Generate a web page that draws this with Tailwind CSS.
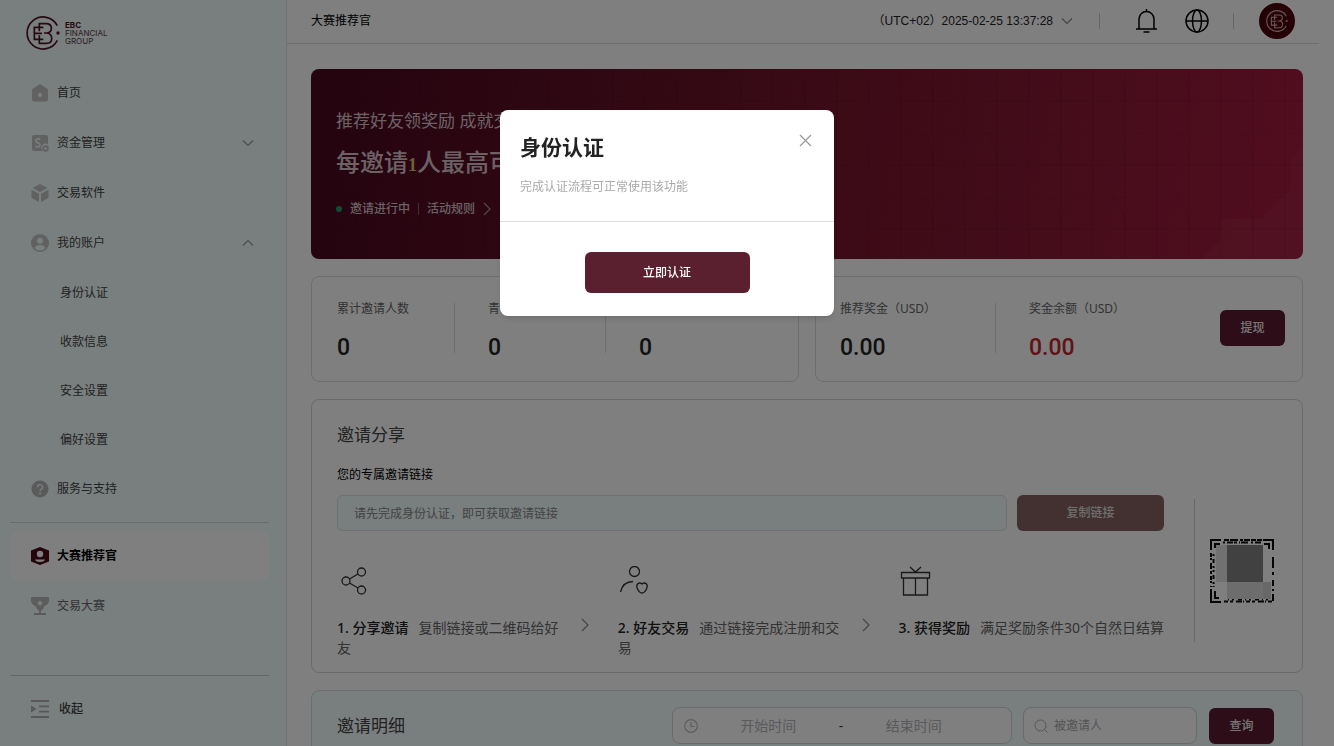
<!DOCTYPE html>
<html lang="zh-CN">

<head>
    <meta charset="UTF-8">
    <meta name="viewport" content="width=device-width, initial-scale=1.0">
    <title>大赛推荐官</title>
    <script src="https://cdn.jsdelivr.net/npm/@tailwindcss/browser@4"></script>
</head>

<body class="h-screen overflow-hidden bg-white text-xs text-[#444] font-['Noto_Sans','Noto_Sans_CJK_SC',sans-serif]">
    <!-- Shared symbols -->
    <svg class="hidden" aria-hidden="true">
        <symbol id="ebc-mark" viewBox="0 0 102 102">
            <g fill="none" stroke="currentColor" stroke-width="5">
                <path d="M94 29A48 48 0 1 0 94 73" />
                <path d="M52 34H25V70H52M25 52H48" />
                <path d="M40 46V23H60C81 23 81 48 63 51H54M63 51C82 54 82 82 62 82H40V58" />
            </g>
            <circle cx="96" cy="51" r="5" fill="currentColor" />
        </symbol>
        <symbol id="chevron-down" viewBox="0 0 12 12">
            <path d="M1 3.5l5 5 5-5" fill="none" stroke="currentColor" stroke-width="1.2" />
        </symbol>
        <symbol id="chevron-right" viewBox="0 0 12 16">
            <path d="M3 2l6 6-6 6" fill="none" stroke="currentColor" stroke-width="1.2" />
        </symbol>
    </svg>

    <div class="flex h-full">
        <!-- Sidebar -->
        <aside class="flex w-[287px] shrink-0 flex-col border-r border-[#e4e4ea] bg-[#f2fcfc]">
            <a href="#" class="flex h-[68px] items-start gap-1 pt-4 pl-[26px] text-[#4e1422]" aria-label="EBC Financial Group">
                <svg class="size-[34px]"><use href="#ebc-mark" /></svg>
                <span class="pt-[5px] pl-px font-['Inter',sans-serif] text-[8px] leading-[8px] text-[#5c3a42]">
                    <b class="text-[#4e1422]">EBC</b><br>FINANCIAL<br>GROUP
                </span>
            </a>

            <nav class="flex flex-col">
                <a href="#" class="flex h-[50px] items-center gap-2 pl-[31px]">
                    <svg class="size-[18px] text-[#c2c2c4]" viewBox="0 0 18 18"><path d="M9 0l7 4.600q1 .8 1 2V15.500q0 2-2 2H3q-2 0-2-2V6.600q0-1.200 1-2z" fill="currentColor" /><circle cx="9" cy="11" r="2" fill="#f2fcfc" /></svg>
                    首页
                </a>
                <a href="#" class="flex h-[50px] items-center gap-2 pr-8 pl-[31px]">
                    <svg class="size-[18px] text-[#c2c2c4]" viewBox="0 0 18 18"><path d="M3 1h12q2 0 2 2v7.500a4 4 0 0 0-5 6.500H3q-2 0-2-2V3q0-2 2-2z" fill="currentColor" /><path d="M9 5.500C8 4 4.500 4.500 5 7s4 1.500 4 4-3.500 2.500-4.500 1" fill="none" stroke="#f2fcfc" stroke-width="1.500" /><circle cx="14.500" cy="14.500" r="2.300" fill="none" stroke="currentColor" stroke-width="2" /></svg>
                    <span class="flex-1">资金管理</span>
                    <svg class="size-3 text-[#999]"><use href="#chevron-down" /></svg>
                </a>
                <a href="#" class="flex h-[50px] items-center gap-2 pl-[31px]">
                    <svg class="size-[18px] text-[#c2c2c4]" viewBox="0 0 18 18" fill="currentColor"><path d="M9 0l7.500 4L9 8 1.500 4zM.500 5.800L8 9.700V18L.500 14zM17.500 5.800L10 9.700V18l7.500-4z" /></svg>
                    交易软件
                </a>
                <a href="#" class="flex h-[50px] items-center gap-2 pr-8 pl-[31px]">
                    <svg class="size-[18px] text-[#c2c2c4]" viewBox="0 0 18 18"><circle cx="9" cy="9" r="9" fill="currentColor" /><circle cx="9" cy="6.800" r="3" fill="#f2fcfc" /><path d="M3.500 14Q5 11 9 11t5.500 3Q12 16.500 9 16.500T3.500 14z" fill="#f2fcfc" /></svg>
                    <span class="flex-1">我的账户</span>
                    <svg class="size-3 rotate-180 text-[#999]"><use href="#chevron-down" /></svg>
                </a>
                <a href="#" class="flex h-[49px] items-center pl-[60px]">身份认证</a>
                <a href="#" class="flex h-[49px] items-center pl-[60px]">收款信息</a>
                <a href="#" class="flex h-[49px] items-center pl-[60px]">安全设置</a>
                <a href="#" class="flex h-[49px] items-center pl-[60px]">偏好设置</a>
                <a href="#" class="flex h-[50px] items-center gap-2 pl-[31px]">
                    <svg class="size-[18px] text-[#b4b4b6]" viewBox="0 0 18 18"><circle cx="9" cy="9" r="8.500" fill="currentColor" /><path d="M6.500 7.200a2.500 2.500 0 1 1 3.600 2.200Q9 10 9 11.200" fill="none" stroke="#f2fcfc" stroke-width="1.400" /><circle cx="9" cy="13.400" r="1" fill="#f2fcfc" /></svg>
                    服务与支持
                </a>
            </nav>

            <div class="mx-2.5 mt-2 mr-[17px] border-t border-[#d6d6da] pt-2">
                <a href="#" class="flex h-[50px] items-center gap-2 rounded-lg bg-white pl-[21px] font-bold text-black">
                    <svg class="size-[18px] text-[#4a0a14]" viewBox="0 0 18 18"><path d="M9 0l9 3.500v11L9 18l-9-3.500v-11z" fill="currentColor" /><circle cx="9" cy="7" r="3.200" fill="#fff" /><path d="M4 12.500h10q-1 2.500-5 2.500t-5-2.500z" fill="#fff" /></svg>
                    大赛推荐官
                </a>
                <a href="#" class="flex h-[50px] items-center gap-2 pl-[21px] text-[#666]">
                    <svg class="size-[18px] text-[#b8b8ba]" viewBox="0 0 18 18"><path d="M0 0h18v4q-1 4-4.500 5-1.500 4-3.500 5v2h5v2H3v-2h5v-2q-2-1-3.500-5Q1 8 0 4z" fill="currentColor" /><path d="M9 3l1 2 2 .3-1.500 1.500.400 2.200L9 8l-1.900 1 .400-2.200L6 5.300 8 5z" fill="#f2fcfc" /></svg>
                    交易大赛
                </a>
            </div>

            <div class="mx-2.5 mt-auto mr-[17px] border-t border-[#c8c8cc] pb-[12px]">
                <button type="button" class="flex h-[58px] w-full items-center gap-2.5 pt-2 pl-[21px] font-medium">
                    <svg class="size-[18px] text-[#b0b0b2]" viewBox="0 0 18 18"><path d="M0 1h18M8 6.300h10M8 11.700h10M0 17h18" stroke="currentColor" stroke-width="1.800" /><path d="M0 5.500L5.500 9 0 12.500z" fill="currentColor" /></svg>
                    收起
                </button>
            </div>
        </aside>

        <div class="min-w-0 flex-1">
            <!-- Header -->
            <header class="mr-[15px] flex h-11 items-center border-b border-[#dcdce4] pr-6 pb-0.5 pl-6 text-black">
                <h1 class="flex-1">大赛推荐官</h1>
                <button type="button" class="flex items-center gap-2 font-['Liberation_Sans','Noto_Sans_CJK_SC',sans-serif] text-[#222]">
                    （UTC+02）2025-02-25 13:37:28
                    <svg class="size-3 text-[#888]"><use href="#chevron-down" /></svg>
                </button>
                <span class="ml-[26px] h-4 w-px bg-[#ccc]"></span>
                <button type="button" class="ml-9" aria-label="通知">
                    <svg class="h-6 w-[21px]" viewBox="0 0 21 24" fill="none" stroke="currentColor" stroke-width="1.500"><path d="M0 20h21M3 20V10a7.500 7.500 0 0 1 15 0v10M10.500 0v2.500M7.500 23h6" /></svg>
                </button>
                <button type="button" class="ml-7" aria-label="语言">
                    <svg class="size-6" viewBox="0 0 24 24" fill="none" stroke="currentColor" stroke-width="1.500"><circle cx="12" cy="12" r="11" /><ellipse cx="12" cy="12" rx="4.500" ry="11" /><path d="M1 12h22" /></svg>
                </button>
                <span class="ml-6 h-4 w-px bg-[#ccc]"></span>
                <button type="button" class="ml-[25px] flex size-9 items-center justify-center rounded-full bg-[#4a0008] text-[#d8b0a8]" aria-label="账户">
                    <svg class="size-[22px]"><use href="#ebc-mark" /></svg>
                </button>
            </header>

            <main class="flex flex-col gap-[17px] pt-[25px] pr-[31px] pl-6">
                <!-- Banner -->
                <section class="relative h-[190px] overflow-hidden rounded-lg bg-linear-100 from-[#48081e] via-[#74162c] to-[#a41c40] px-[25px] pt-10 text-[#d8c4cc]">
                    <svg class="absolute inset-0 size-full" aria-hidden="true">
                        <defs>
                            <pattern id="grid" width="64" height="64" patternUnits="userSpaceOnUse">
                                <path d="M0 0H64M0 32H64M14 0V64M46 0V64M34 0Q46 10 46 32" fill="none" stroke="#30000e" stroke-opacity=".14" />
                            </pattern>
                        </defs>
                        <path d="M890 190l20-20v-20h40l30-30v-30l20-20v120z" fill="#fff" fill-opacity=".03" />
                        <rect width="100%" height="100%" fill="url(#grid)" />
                    </svg>
                    <div class="relative">
                        <p class="text-[17px] leading-6">推荐好友领奖励 成就交易梦想</p>
                        <h2 class="mt-3 text-2xl leading-[34px] font-medium">每邀请<span class="font-['Liberation_Serif',serif] text-lg font-bold text-[#e0c070]">1</span>人最高可得奖励</h2>
                        <div class="mt-[22px] flex items-center font-medium">
                            <span class="mr-2 size-1.5 rounded-full bg-[#1c9c70]"></span>
                            邀请进行中
                            <span class="mx-2 h-3 w-px bg-[#8c5c6c]"></span>
                            <a href="#" class="flex items-center gap-1.5">活动规则
                                <svg class="h-4 w-3 text-[#a88c98]"><use href="#chevron-right" /></svg>
                            </a>
                        </div>
                    </div>
                </section>

                <!-- Stats -->
                <section class="grid grid-cols-2 gap-4 text-[#666]">
                    <dl class="flex rounded-lg border border-[#dcdce0] pt-6 pb-[21px] pl-[25px]">
                        <div class="flex w-[151px] justify-between">
                            <div>
                                <dt class="leading-4">累计邀请人数</dt>
                                <dd class="mt-[19px] font-['Roboto',sans-serif] text-[23px] leading-6 font-medium text-[#222]">0</dd>
                            </div>
                            <span class="mt-0.5 mr-[33px] h-[50px] w-px bg-[#ddd]"></span>
                        </div>
                        <div class="flex w-[151px] justify-between">
                            <div>
                                <dt class="leading-4">青铜推荐</dt>
                                <dd class="mt-[19px] font-['Roboto',sans-serif] text-[23px] leading-6 font-medium text-[#222]">0</dd>
                            </div>
                            <span class="mt-0.5 mr-[33px] h-[50px] w-px bg-[#ddd]"></span>
                        </div>
                        <div>
                            <dt class="leading-4">有效人数</dt>
                            <dd class="mt-[19px] font-['Roboto',sans-serif] text-[23px] leading-6 font-medium text-[#222]">0</dd>
                        </div>
                    </dl>
                    <div class="flex rounded-lg border border-[#dcdce0] pt-6 pr-[17px] pb-[21px] pl-6">
                        <dl class="flex flex-1">
                            <div class="flex w-[189px] justify-between">
                                <div>
                                    <dt class="leading-4">推荐奖金（USD）</dt>
                                    <dd class="mt-[19px] font-['Roboto',sans-serif] text-[23px] leading-6 font-medium text-[#222]">0.00</dd>
                                </div>
                                <span class="mt-0.5 mr-[33px] h-[50px] w-px bg-[#ddd]"></span>
                            </div>
                            <div>
                                <dt class="leading-4">奖金余额（USD）</dt>
                                <dd class="mt-[19px] font-['Roboto',sans-serif] text-[23px] leading-6 font-medium text-[#c4242c]">0.00</dd>
                            </div>
                        </dl>
                        <button type="button" class="mt-[9px] h-9 w-[65px] rounded-md bg-[#5b1c30] font-medium text-[#eee]">提现</button>
                    </div>
                </section>

                <!-- Share -->
                <section class="flex rounded-lg border border-[#d4d4d8] pt-[23px] pr-7 pb-[14px] pl-[25px]">
                    <div class="min-w-0 flex-1">
                        <h2 class="text-[17px] leading-6">邀请分享</h2>
                        <label for="inviteLink" class="mt-5 block leading-4 text-black">您的专属邀请链接</label>
                        <div class="mt-3 flex gap-[10px]">
                            <input id="inviteLink" type="text" readonly placeholder="请先完成身份认证，即可获取邀请链接"
                                class="h-9 min-w-0 flex-1 rounded-md border border-[#dde0e8] bg-[#f2fcfc] px-4 placeholder:text-[#888]">
                            <button type="button" class="h-9 w-[147px] rounded-md bg-[#876060] font-medium text-[#ddd]">复制链接</button>
                        </div>
                        <ol class="mt-[35px] flex text-sm leading-5 text-[#666]">
                            <li class="w-[232px]">
                                <svg class="mb-[22px] h-[30px] w-[34px] text-[#333]" viewBox="0 0 34 30" fill="none" stroke="currentColor" stroke-width="1.300"><circle cx="9" cy="15" r="4" /><circle cx="24.500" cy="6" r="4" /><circle cx="24.500" cy="24" r="4" /><path d="M12.500 13l8.500-5M12.500 17l8.500 5" /></svg>
                                <strong class="mr-2.5 font-medium text-[#222]">1. 分享邀请</strong>复制链接或二维码给好友
                            </li>
                            <li class="w-[49px] pt-[51px] pl-[10px]" aria-hidden="true"><svg class="h-4 w-3 text-[#888]"><use href="#chevron-right" /></svg></li>
                            <li class="w-[232px]">
                                <svg class="mb-[22px] h-[30px] w-[34px] text-[#333]" viewBox="0 0 34 30" fill="none" stroke="currentColor" stroke-width="1.300"><circle cx="16.500" cy="5.500" r="5" /><path d="M2.500 26Q5 15.500 15 15.500" /><path d="M24 18q-2.500-2-4.500 0-1.500 2 0 5 2 4 4.500 4t4.500-4q1.500-3 0-5-2-2-4.500 0z" /></svg>
                                <strong class="mr-2.5 font-medium text-[#222]">2. 好友交易</strong>通过链接完成注册和交易
                            </li>
                            <li class="w-[49px] pt-[51px] pl-[10px]" aria-hidden="true"><svg class="h-4 w-3 text-[#888]"><use href="#chevron-right" /></svg></li>
                            <li class="flex-1 whitespace-nowrap">
                                <svg class="mb-[22px] h-[30px] w-[34px] text-[#333]" viewBox="0 0 34 30" fill="none" stroke="currentColor" stroke-width="1.300"><path d="M2.500 6.500h28V12h-28zM4.500 12v17h24V12M16.500 12v17M11 1l5.500 5L22 1" /></svg>
                                <strong class="mr-2.5 font-medium text-[#222]">3. 获得奖励</strong>满足奖励条件30个自然日结算
                            </li>
                        </ol>
                    </div>
                    <div class="mt-[76px] mb-4 ml-[30px] flex items-center border-l border-[#d0d0d4] pl-[15px]">
                        <svg class="size-16" viewBox="0 0 64 64" role="img" aria-label="邀请二维码">
                            <g fill="none" stroke="#0c0c0c" stroke-width="2">
                                <path d="M1 11V1H11M5 9V5H10M53 1H63V11M54 5H59V10M1 50V63H11M5 52V59H9" />
                                <path d="M14 1H52" stroke-dasharray="5 1 8 2 3 1 6 1" />
                                <path d="M13 3.500H52" stroke-dasharray="2 2 6 1 3 2 1 1 7 3" />
                                <path d="M1 14V48" stroke-dasharray="4 1 2 3 6 2 3 2" />
                                <path d="M3.500 15V48" stroke-dasharray="2 3 4 3 2 2" />
                                <path d="M14 62.500H62" stroke-dasharray="4 2 3 3 6 1 1 2" />
                                <path d="M18 60.500H60" stroke-dasharray="1 3 2 4 4 3" />
                                <path d="M63 18V62" stroke-dasharray="11 4 3 5 6 3 2 3" />
                            </g>
                            <path d="M6 6h11v37H6z" fill="#e2e2e2" />
                            <path d="M17 6h36v37H17z" fill="#828282" />
                            <path d="M17 43h36v17H17z" fill="#dadada" />
                            <path d="M53 43h8v17h-8z" fill="#d0d0d0" />
                        </svg>
                    </div>
                </section>

                <!-- Details -->
                <section class="flex h-[120px] rounded-lg border border-[#dcdce0] bg-[#f2fcfc] pt-4 pr-7 pl-[25px]">
                    <h2 class="flex-1 pt-[7px] text-[17px] leading-6">邀请明细</h2>
                    <div class="mr-[11px] flex h-[37px] w-[340px] items-center rounded-lg border border-[#d4d4d8] bg-white px-[11px] text-sm">
                        <svg class="size-3.5 shrink-0 text-[#bbb]" viewBox="0 0 14 14" fill="none" stroke="currentColor" stroke-width="1.200"><circle cx="7" cy="7" r="6.300" /><path d="M7 3v4.500h3.500" /></svg>
                        <input type="text" aria-label="开始时间" placeholder="开始时间" class="min-w-0 flex-1 text-center placeholder:text-[#b4b4b8]">
                        <span>-</span>
                        <input type="text" aria-label="结束时间" placeholder="结束时间" class="min-w-0 flex-1 text-center placeholder:text-[#b4b4b8]">
                        <span class="w-4"></span>
                    </div>
                    <div class="mr-3 flex h-[37px] w-[174px] items-center gap-1.5 rounded-lg border border-[#d4d4d8] bg-white px-[10px]">
                        <svg class="size-3.5 shrink-0 text-[#aaa]" viewBox="0 0 14 14" fill="none" stroke="currentColor"><circle cx="6.500" cy="6.500" r="5.500" /><path d="M10.500 10.500l3 3" /></svg>
                        <input type="text" aria-label="被邀请人" placeholder="被邀请人" class="min-w-0 flex-1 placeholder:text-[#aaa]">
                    </div>
                    <button type="button" class="mt-px h-9 w-[65px] rounded-md bg-[#5b1c30] font-medium text-[#eee]">查询</button>
                </section>
            </main>
        </div>
    </div>

    <!-- Verification dialog -->
    <div class="fixed inset-0 flex items-start justify-center bg-black/50 pt-[110px]">
        <div role="dialog" aria-modal="true" aria-labelledby="dialogTitle" class="w-[334px] rounded-lg bg-white shadow-md">
            <div class="border-b border-[#dcdce4] px-5 pt-[23px] pb-[25px]">
                <div class="flex items-start justify-between">
                    <h2 id="dialogTitle" class="text-[21px] leading-7 font-bold text-[#222]">身份认证</h2>
                    <button type="button" class="mt-px mr-0.5" aria-label="关闭">
                        <svg class="size-[13px] text-[#999]" viewBox="0 0 13 13"><path d="M1 1l11 11M12 1L1 12" stroke="currentColor" stroke-width="1.200" /></svg>
                    </button>
                </div>
                <p class="mt-[17px] leading-[18px] text-[#aaa]">完成认证流程可正常使用该功能</p>
            </div>
            <div class="flex justify-center pt-[30px] pb-[23px]">
                <button type="button" class="h-[41px] w-[165px] rounded-md bg-[#5b2030] font-medium text-white">立即认证</button>
            </div>
        </div>
    </div>
</body>

</html>
